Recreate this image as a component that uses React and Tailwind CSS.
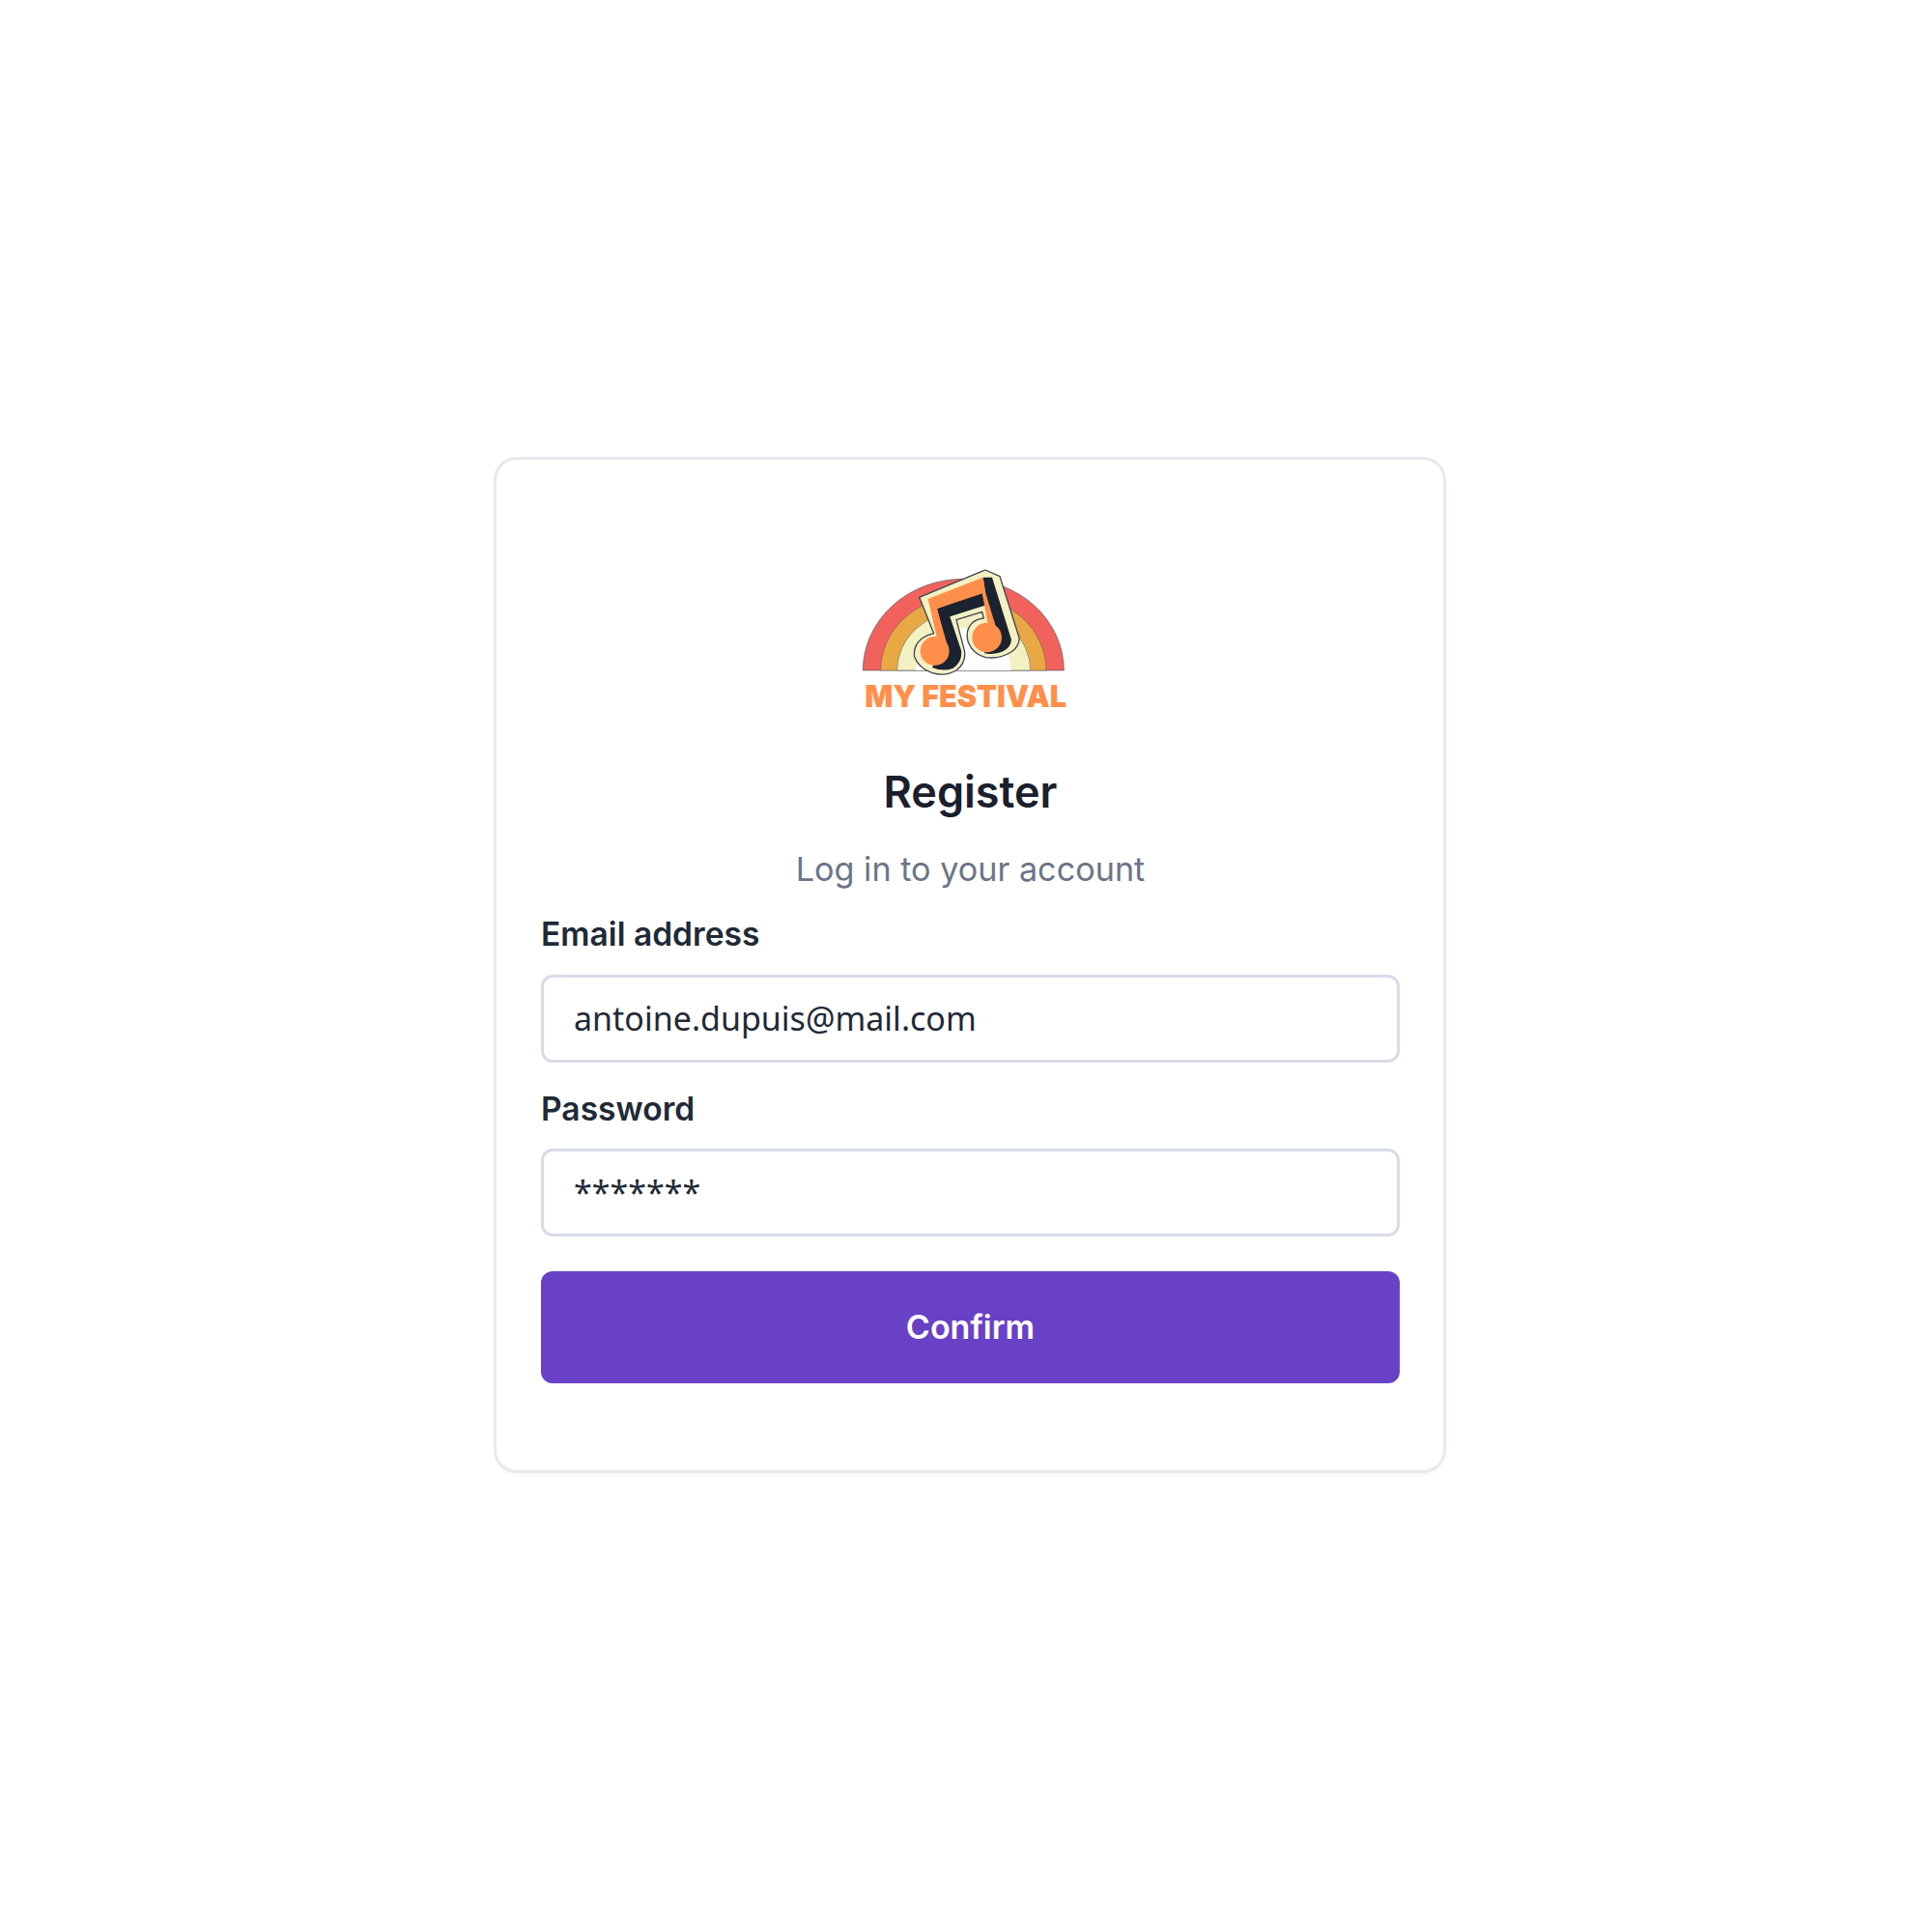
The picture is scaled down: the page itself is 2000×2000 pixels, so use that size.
function Logo() {
  return (
    <svg width="240" height="180" viewBox="0 0 720 540" className="block overflow-visible">
      <path d="M70 372 A312 284 0 0 1 694 372 Z" fill="#f2625d" stroke="#555" strokeWidth="2" />
      <path d="M125 372 A257 232 0 0 1 639 372 Z" fill="#e8a945" stroke="#555" strokeWidth="1.5" />
      <path d="M176 372 A206 184 0 0 1 590 372 Z" fill="#f3f0c2" stroke="#555" strokeWidth="1.5" />
      <path d="M234 372 A148 132 0 0 1 530 372 Z" fill="#ffffff" />
      <g transform="translate(225 45)">
        <path
          d="M20 100 L225 15 L270 35 L330 225 Q332 252 305 270 Q270 292 228 287 Q188 278 172 240 Q160 200 188 176 Q203 166 220 165 L215 145 L135 170 L160 265 Q167 302 135 327 Q100 347 60 335 Q18 320 5 285 Q0 250 28 228 Q45 216 65 212 Z"
          fill="#f3f0c2"
          stroke="#3f4552"
          strokeWidth="4"
          strokeLinejoin="round"
        />
        <path
          d="M75 135 L215 85 L225 125 L115 160 L150 265 Q155 300 125 320 Q95 332 60 318 L100 240 Z"
          fill="#1b2230"
        />
        <path
          d="M218 38 L246 38 L306 232 Q305 255 280 268 Q255 280 222 274 L255 200 L225 85 Z"
          fill="#1b2230"
        />
        <path d="M47 105 L218 38 L225 85 L75 135 L106 245 L78 240 Z" fill="#ff8f4a" />
        <circle cx="68" cy="267" r="45" fill="#ff8f4a" />
        <path d="M215 85 L225 85 L256 185 L236 200 Z" fill="#ff8f4a" />
        <circle cx="230" cy="225" r="46" fill="#ff8f4a" />
      </g>
      <text x="76" y="487" textLength="626" lengthAdjust="spacingAndGlyphs" fill="#ff8f4a" className="font-['Inter',sans-serif] font-black text-[96px]">MY FESTIVAL</text>
    </svg>
  );
}

export default function App() {
  return (
    <div className="min-h-screen w-full bg-white flex items-start justify-center pt-[473px] pl-[8px] font-['Inter',sans-serif]">
      <div className="w-[986px] h-[1052px] border-[3px] border-[#e8e8ef] rounded-[24px] pl-[46px] pr-[45px] flex flex-col shadow-[0_2px_4px_rgba(0,0,0,0.03)]">
        <div className="flex justify-center mt-[94px] h-[180px] pr-[30px]">
          <Logo />
        </div>
        <h1 className="text-center text-[#1a202c] text-[45px] font-semibold leading-[60px] mt-[40px]">Register</h1>
        <p className="text-center text-[#6b7488] text-[34.2px] font-normal leading-[48px] mt-[26px]">Log in to your account</p>
        <label className="text-[#1f2a37] text-[33.6px] font-semibold leading-[44px] mt-[21px]">Email address</label>
        <div className="mt-[20px] h-[91px] rounded-[12px] border-[3px] border-[#d8dbe8] pl-[31px] flex items-center font-['Noto_Sans',sans-serif] text-[34px] text-[#1f2a37]">antoine.dupuis@mail.com</div>
        <label className="text-[#1f2a37] text-[33.6px] font-semibold leading-[44px] mt-[26px]">Password</label>
        <div className="mt-[19px] h-[91px] rounded-[12px] border-[3px] border-[#d8dbe8] pl-[31px] flex items-center font-['Noto_Sans',sans-serif] text-[34px] text-[#1f2a37]">*******</div>
        <button className="mt-[36px] h-[116px] pb-[2px] rounded-[12px] bg-[#6941c6] text-white text-[34px] font-semibold">Confirm</button>
      </div>
    </div>
  );
}
